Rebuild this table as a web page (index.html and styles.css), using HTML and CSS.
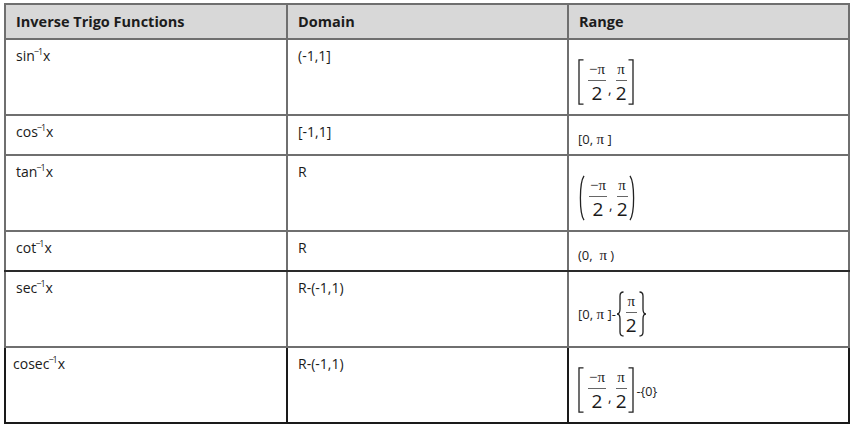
FILE: index.html
```html
<!DOCTYPE html>
<html>
<head>
<meta charset="utf-8">
<link rel="stylesheet" href="styles.css">
</head>
<body>
<table class="trig">
  <colgroup>
    <col class="c1"><col class="c2"><col class="c3">
  </colgroup>
  <tr class="head">
    <th>Inverse Trigo Functions</th>
    <th>Domain</th>
    <th>Range</th>
  </tr>
  <tr class="tall">
    <td>sin<sup>−1</sup>x</td>
    <td>(-1,1]</td>
    <td class="range">
      <span class="math">
        <svg class="br" width="6" height="46" viewBox="0 0 6 46"><path d="M5.5 0.8 H1 V45.2 H5.5" /></svg>
        <span class="frac"><span class="num">−π</span><span class="den">2</span></span>
        <span class="comma">,</span>
        <span class="frac"><span class="num">π</span><span class="den">2</span></span>
        <svg class="br" width="6" height="46" viewBox="0 0 6 46"><path d="M0.5 0.8 H5 V45.2 H0.5" /></svg>
      </span>
    </td>
  </tr>
  <tr class="short">
    <td>cos<sup>−1</sup>x</td>
    <td>[-1,1]</td>
    <td class="range"><span class="small line">[0, <span class="pi">π</span> ]</span></td>
  </tr>
  <tr class="tall">
    <td>tan<sup>−1</sup>x</td>
    <td>R</td>
    <td class="range">
      <span class="math">
        <svg class="br" width="7" height="46" viewBox="0 0 7 46"><path d="M6 0.8 C1.2 8 1.2 38 6 45.2" /></svg>
        <span class="frac"><span class="num">−π</span><span class="den">2</span></span>
        <span class="comma">,</span>
        <span class="frac"><span class="num">π</span><span class="den">2</span></span>
        <svg class="br" width="7" height="46" viewBox="0 0 7 46"><path d="M1 0.8 C5.8 8 5.8 38 1 45.2" /></svg>
      </span>
    </td>
  </tr>
  <tr class="short dark">
    <td>cot<sup>−1</sup>x</td>
    <td>R</td>
    <td class="range"><span class="small line">(0,&nbsp; <span class="pi">π</span> )</span></td>
  </tr>
  <tr class="tall">
    <td>sec<sup>−1</sup>x</td>
    <td>R-(-1,1)</td>
    <td class="range">
      <span class="math">
        <span class="small">[0, <span class="pi">π</span> ]-</span>
        <svg class="brace" width="9" height="46" viewBox="0 0 9 46"><path d="M7.5 1 Q4 1 4 5 V18 Q4 23 1 23 Q4 23 4 28 V41 Q4 45 7.5 45" /></svg>
        <span class="frac solo"><span class="num">π</span><span class="den">2</span></span>
        <svg class="brace" width="9" height="46" viewBox="0 0 9 46"><path d="M1.5 1 Q5 1 5 5 V18 Q5 23 8 23 Q5 23 5 28 V41 Q5 45 1.5 45" /></svg>
      </span>
    </td>
  </tr>
  <tr class="tall last">
    <td class="first">cosec<sup>−1</sup>x</td>
    <td>R-(-1,1)</td>
    <td class="range">
      <span class="math">
        <svg class="br" width="6" height="46" viewBox="0 0 6 46"><path d="M5.5 0.8 H1 V45.2 H5.5" /></svg>
        <span class="frac"><span class="num">−π</span><span class="den">2</span></span>
        <span class="comma">,</span>
        <span class="frac"><span class="num">π</span><span class="den">2</span></span>
        <svg class="br" width="6" height="46" viewBox="0 0 6 46"><path d="M0.5 0.8 H5 V45.2 H0.5" /></svg>
        <span class="small tail">-{0}</span>
      </span>
    </td>
  </tr>
</table>
</body>
</html>
```

FILE: styles.css
```css
html, body {
  margin: 0;
  padding: 0;
  background: #ffffff;
}

body {
  padding: 3px 0 0 4px;
  font-family: "Open Sans", "Noto Sans", "DejaVu Sans", sans-serif;
  color: #1a1a1a;
}

.trig {
  border-collapse: collapse;
  table-layout: fixed;
  width: 846px;
}

.c1 { width: 282px; }
.c2 { width: 281px; }
.c3 { width: 281px; }

.trig th,
.trig td {
  border: 2px solid #6f6f6f;
  text-align: left;
  padding: 0 0 0 10px;
}

.head th {
  height: 33px;
  background: #d8d8d8;
  font-size: 14.5px;
  font-weight: 700;
  color: #1c1c1c;
  vertical-align: middle;
}

.trig td {
  vertical-align: top;
  font-size: 14px;
  line-height: 19px;
  padding-top: 6px;
  padding-bottom: 0;
}

.tall td { height: 68px; }
.short td { height: 32px; }

.trig td sup {
  font-size: 9px;
  line-height: 0;
  vertical-align: 6px;
  letter-spacing: -1px;
  margin: 0 1px 0 -1px;
}

.dark td { border-bottom-color: #2a2a2a; }

.last td { border-color: #1a1a1a; }

.trig td.first { padding-left: 7px; }

.trig td.range { padding-left: 9px; }

.small {
  font-size: 13px;
  color: #222;
}

.small.line {
  display: block;
  margin-top: 8px;
}

.pi {
  font-family: "Liberation Serif", "DejaVu Serif", serif;
  font-size: 15px;
}

.math {
  display: flex;
  align-items: center;
  margin-top: 13px;
  height: 46px;
}

.br, .brace {
  flex: none;
  display: block;
}

.br path, .brace path {
  fill: none;
  stroke: #222;
  stroke-width: 1.3;
}

.frac {
  display: inline-flex;
  flex-direction: column;
  align-items: center;
  margin: 0 1px 0 4px;
}

.frac.solo { margin: 0 1px; }

.num {
  font-family: "Liberation Serif", "DejaVu Serif", serif;
  font-size: 15px;
  line-height: 20px;
  height: 20px;
  padding: 0 1px 1px;
  border-bottom: 1px solid #666;
  align-self: stretch;
  text-align: center;
}

.den {
  font-size: 19px;
  line-height: 24px;
}

.comma {
  font-size: 14px;
  line-height: 14px;
  align-self: center;
  transform: translateY(7px);
  margin: 0 0 0 1px;
}

.tail {
  font-size: 12.5px;
  margin-left: 3px;
  margin-top: 2px;
}
```
